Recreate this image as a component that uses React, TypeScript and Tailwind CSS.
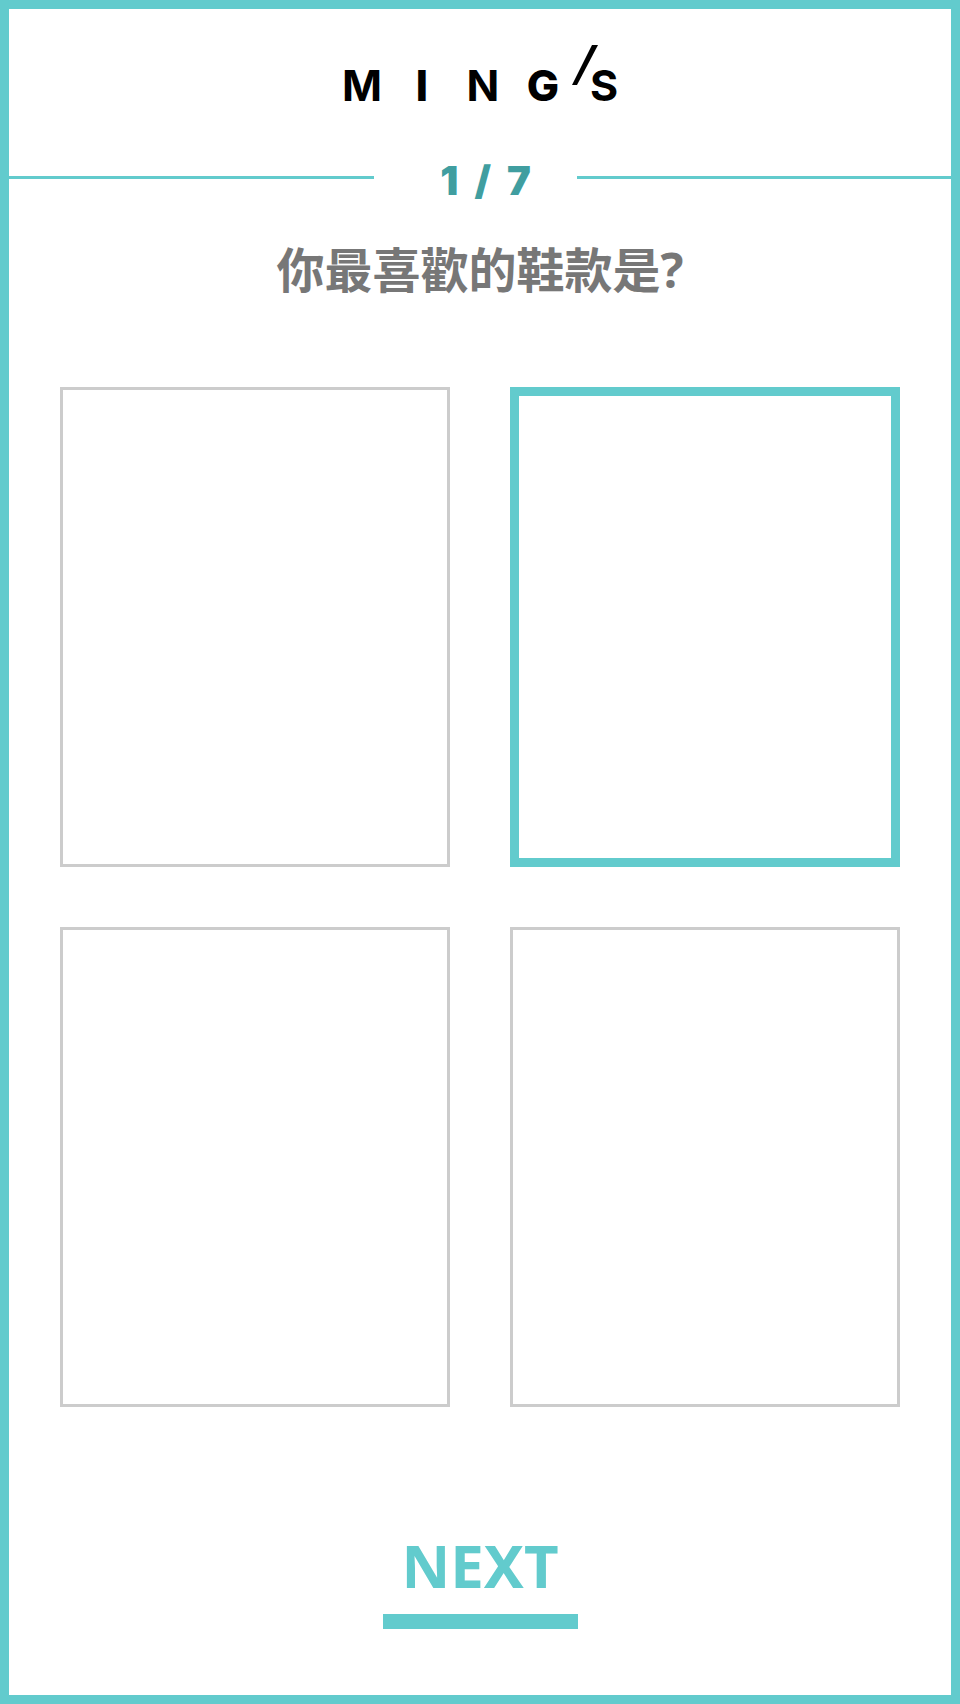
import { useState } from "react";

const choices = ["A", "B", "C", "D"];

function Logo() {
  return (
    <svg
      viewBox="0 0 288 76"
      className="h-[76px] w-[288px]"
      role="img"
      aria-label="MING'S"
      fill="#000"
      fontFamily="Inter, 'Liberation Sans', sans-serif"
      fontWeight="800"
      fontSize="43"
      textAnchor="middle"
    >
      <text x="26" y="56" fontWeight="700">M</text>
      <text x="86" y="56">I</text>
      <text x="147" y="56" fontWeight="700">N</text>
      <text x="207" y="56">G</text>
      <text x="268" y="56" fontWeight="700">S</text>
      <path d="M256 0h6l-21 40h-5z" />
    </svg>
  );
}

export default function App() {
  const [selected, setSelected] = useState(1);
  return (
    <div className="min-h-screen border-[9px] border-[#62cbcd] bg-white">
      <main className="flex flex-col items-center pt-9">
        <Logo />
        <div className="mt-7 flex w-full items-center">
          <div className="h-[3px] flex-[365] bg-[#62cbcd]" />
          <p className="flex w-[203px] justify-center gap-4 pt-2 pl-5 font-[Inter,'Liberation_Sans',sans-serif] text-[40px] leading-12 font-black text-[#409ea0]">
            <span>1</span>
            <span>/</span>
            <span>7</span>
          </p>
          <div className="h-[3px] flex-[374] bg-[#62cbcd]" />
        </div>
        <h1 className="mt-[29px] font-['Noto_Sans','Noto_Sans_CJK_TC',sans-serif] text-[48px] leading-[72px] font-bold text-[#777777]">
          你最喜歡的鞋款是?
        </h1>
        <div className="mt-[81px] grid w-full grid-cols-2 gap-[60px] px-[51px]">
          {choices.map((choice, i) => (
            <button
              key={choice}
              type="button"
              aria-label={choice}
              aria-pressed={selected === i}
              onClick={() => setSelected(i)}
              className={
                selected === i
                  ? "h-[480px] border-[9px] border-[#62cbcd]"
                  : "h-[480px] border-[3px] border-[#cccccc]"
              }
            />
          ))}
        </div>
        <button
          type="button"
          className="mt-[118px] mb-16 w-[195px] border-b-[15px] border-[#62cbcd] pb-[9px] text-center font-['Noto_Sans',sans-serif] text-[60px] leading-20 font-bold text-[#62cbcd]"
        >
          NEXT
        </button>
      </main>
    </div>
  );
}
